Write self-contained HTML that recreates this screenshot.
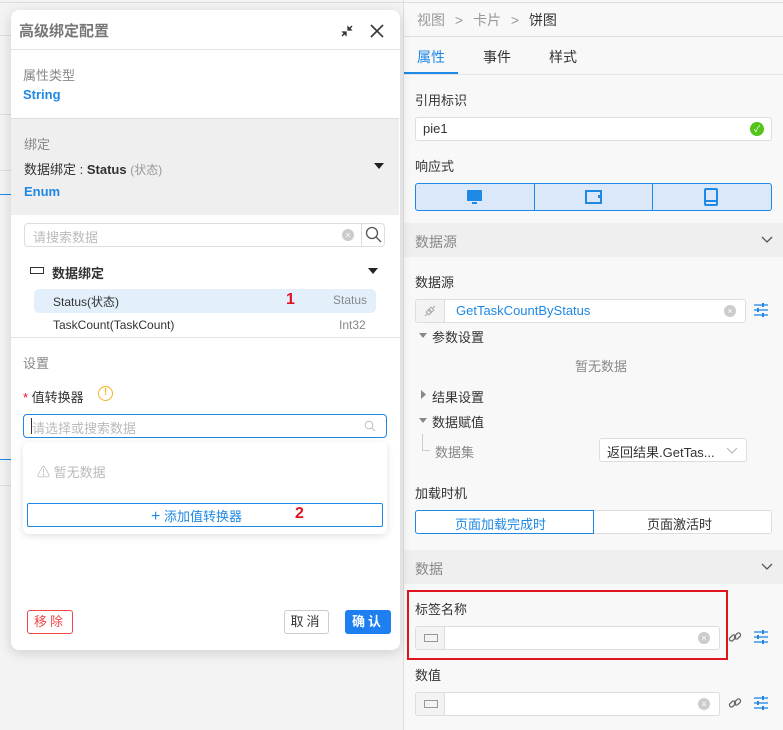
<!DOCTYPE html>
<html><head><meta charset="utf-8"><style>
*{box-sizing:border-box;margin:0;padding:0}
body{width:783px;height:730px;overflow:hidden;background:#f3f3f3;font-family:"Liberation Sans","Noto Sans CJK SC",sans-serif;font-size:13px;color:#333;position:relative}
.a{position:absolute}
.t{position:absolute;white-space:nowrap}
.inp{position:absolute;background:#fff;border:1px solid #ddd;border-radius:3px}
.clr{position:absolute;width:12px;height:12px;border-radius:50%;background:#ccc;color:#fff;font-size:9px;line-height:12px;text-align:center}
</style></head><body>
<div class="a" style="left:0;top:2px;width:403px;height:1px;background:#ddd"></div>
<div class="a" style="left:0;top:35px;width:12px;height:1px;background:#ddd"></div>
<div class="a" style="left:0;top:114px;width:12px;height:1px;background:#ddd"></div>
<div class="a" style="left:0;top:170px;width:12px;height:1px;background:#ddd"></div>
<div class="a" style="left:0;top:194px;width:12px;height:1px;background:#1e88e5"></div>
<div class="a" style="left:0;top:459px;width:12px;height:1px;background:#1e88e5"></div>
<div class="a" style="left:0;top:485px;width:12px;height:1px;background:#ddd"></div>

<div class="a" style="left:403px;top:0;width:380px;height:730px;background:#f8f8f8;border-left:1px solid #ddd"></div>
<div class="a" style="left:403px;top:2px;width:380px;height:1px;background:#ddd"></div>
<div class="t" style="left:417px;top:10px;color:#999;font-size:14px">视图 <span style="margin:0 6px">&gt;</span> 卡片 <span style="margin:0 6px">&gt;</span> <span style="color:#333">饼图</span></div>
<div class="a" style="left:403px;top:36px;width:380px;height:1px;background:#ddd"></div>
<div class="t" style="left:417px;top:47px;color:#1e88e5;font-size:14px">属性</div>
<div class="t" style="left:483px;top:47px;font-size:14px">事件</div>
<div class="t" style="left:549px;top:47px;font-size:14px">样式</div>
<div class="a" style="left:404px;top:72px;width:54px;height:3px;background:#1e88e5"></div>
<div class="a" style="left:404px;top:74px;width:379px;height:1px;background:#e5e5e5"></div>
<div class="t" style="left:415px;top:90px;font-size:13px">引用标识</div>
<div class="inp" style="left:415px;top:117px;width:357px;height:24px"></div>
<div class="t" style="left:423px;top:121px;font-size:13px">pie1</div>
<div class="a" style="left:750px;top:122px;width:14px;height:14px;border-radius:50%;background:#52c41a;color:#fff;font-size:9px;text-align:center;line-height:14px">✓</div>
<div class="t" style="left:415px;top:156px">响应式</div>
<div class="a" style="left:415px;top:183px;width:357px;height:28px;background:#dbe8fa;border:1px solid #1e88e5;border-radius:3px"></div>
<div class="a" style="left:534px;top:183px;width:1px;height:28px;background:#1e88e5"></div>
<div class="a" style="left:652px;top:183px;width:1px;height:28px;background:#1e88e5"></div>
<svg class="a" style="left:466px;top:189px" width="17" height="17" viewBox="0 0 17 17"><rect x="1" y="1" width="15" height="10" rx="1" fill="#1e88e5"/><rect x="1" y="10" width="15" height="2" fill="#1e88e5"/><rect x="6" y="13" width="5" height="2" fill="#1e88e5"/></svg>
<svg class="a" style="left:585px;top:190px" width="17" height="15"><rect x="1" y="1" width="15" height="12" fill="none" stroke="#1e88e5" stroke-width="2"/><rect x="13" y="5" width="2" height="3" fill="#1e88e5"/></svg>
<svg class="a" style="left:704px;top:188px" width="14" height="18"><rect x="1" y="1" width="12" height="16" rx="1" fill="none" stroke="#1e88e5" stroke-width="2"/><rect x="2" y="12" width="10" height="2" fill="#1e88e5"/></svg>
<div class="a" style="left:404px;top:223px;width:379px;height:34px;background:#efefef"></div>
<div class="t" style="left:415px;top:232px;color:#888;font-size:14px">数据源</div>
<svg class="a" style="left:761px;top:236px" width="12" height="8"><path d="M1 1 L6 6 L11 1" fill="none" stroke="#555" stroke-width="1.3"/></svg>
<div class="t" style="left:415px;top:272px">数据源</div>
<div class="inp" style="left:415px;top:299px;width:331px;height:24px"></div>
<div class="a" style="left:416px;top:300px;width:29px;height:22px;background:#f3f3f3;border-right:1px solid #ddd"></div>
<svg class="a" style="left:423px;top:304px" width="14" height="14"><g fill="none" stroke="#aaa" stroke-width="1"><path d="M2 12 L5 9 M12 2 L9 5"/><rect x="4" y="6" width="4" height="4" transform="rotate(-45 6 8)"/><rect x="6" y="4" width="4" height="4" transform="rotate(-45 8 6)"/></g></svg>
<div class="t" style="left:456px;top:303px;color:#1e88e5">GetTaskCountByStatus</div>
<div class="clr" style="left:724px;top:305px">×</div>
<svg class="a" style="left:754px;top:303px" width="14" height="14"><g stroke="#1e88e5" stroke-width="1.3"><line x1="0" y1="2" x2="14" y2="2"/><line x1="0" y1="7" x2="14" y2="7"/><line x1="0" y1="12" x2="14" y2="12"/></g><g fill="#1e88e5"><rect x="8" y="0" width="2" height="4"/><rect x="3" y="5" width="2" height="4"/><rect x="8" y="10" width="2" height="4"/></g></svg>
<svg class="a" style="left:419px;top:333px" width="8" height="6"><path d="M0 0 L8 0 L4 5Z" fill="#888"/></svg>
<div class="t" style="left:432px;top:327px">参数设置</div>
<div class="t" style="left:575px;top:356px;color:#888">暂无数据</div>
<svg class="a" style="left:421px;top:390px" width="6" height="9"><path d="M0 0 L5 4.5 L0 9Z" fill="#888"/></svg>
<div class="t" style="left:432px;top:387px">结果设置</div>
<svg class="a" style="left:419px;top:418px" width="8" height="6"><path d="M0 0 L8 0 L4 5Z" fill="#888"/></svg>
<div class="t" style="left:432px;top:412px">数据赋值</div>
<div class="a" style="left:422px;top:434px;width:8px;height:17px;border-left:1px solid #ccc;border-bottom:1px solid #ccc"></div>
<div class="t" style="left:435px;top:442px;color:#888">数据集</div>
<div class="inp" style="left:599px;top:438px;width:148px;height:24px"></div>
<div class="t" style="left:607px;top:442px">返回结果.GetTas...</div>
<svg class="a" style="left:726px;top:447px" width="12" height="8"><path d="M1 1 L6 6 L11 1" fill="none" stroke="#bbb" stroke-width="1.2"/></svg>
<div class="t" style="left:415px;top:483px">加载时机</div>
<div class="inp" style="left:415px;top:510px;width:357px;height:24px"></div>
<div class="a" style="left:415px;top:510px;width:179px;height:24px;border:1px solid #1e88e5;border-radius:3px 0 0 3px;background:#fff"></div>
<div class="t" style="left:455px;top:514px;color:#1e88e5">页面加载完成时</div>
<div class="t" style="left:647px;top:514px">页面激活时</div>
<div class="a" style="left:404px;top:550px;width:379px;height:34px;background:#efefef"></div>
<div class="t" style="left:415px;top:559px;color:#888;font-size:14px">数据</div>
<svg class="a" style="left:761px;top:563px" width="12" height="8"><path d="M1 1 L6 6 L11 1" fill="none" stroke="#555" stroke-width="1.3"/></svg>
<div class="a" style="left:407px;top:590px;width:321px;height:70px;border:2px solid #e0141e"></div>
<div class="t" style="left:415px;top:599px">标签名称</div>
<div class="inp" style="left:415px;top:626px;width:305px;height:24px"></div>
<div class="a" style="left:416px;top:627px;width:29px;height:22px;background:#f3f3f3;border-right:1px solid #ddd"></div>
<div class="a" style="left:424px;top:634px;width:14px;height:8px;border:1px solid #999"></div>
<div class="clr" style="left:698px;top:632px">×</div>
<svg class="a" style="left:728px;top:630px" width="14" height="14"><g fill="none" stroke="#666" stroke-width="1.3"><rect x="1" y="6" width="7" height="4" rx="2" transform="rotate(-45 4.5 8)"/><rect x="6" y="4" width="7" height="4" rx="2" transform="rotate(-45 9.5 6)"/></g></svg>
<svg class="a" style="left:754px;top:630px" width="14" height="14"><g stroke="#1e88e5" stroke-width="1.3"><line x1="0" y1="2" x2="14" y2="2"/><line x1="0" y1="7" x2="14" y2="7"/><line x1="0" y1="12" x2="14" y2="12"/></g><g fill="#1e88e5"><rect x="8" y="0" width="2" height="4"/><rect x="3" y="5" width="2" height="4"/><rect x="8" y="10" width="2" height="4"/></g></svg>
<div class="t" style="left:415px;top:665px">数值</div>
<div class="inp" style="left:415px;top:692px;width:305px;height:24px"></div>
<div class="a" style="left:416px;top:693px;width:29px;height:22px;background:#f3f3f3;border-right:1px solid #ddd"></div>
<div class="a" style="left:424px;top:700px;width:14px;height:8px;border:1px solid #999"></div>
<div class="clr" style="left:698px;top:698px">×</div>
<svg class="a" style="left:728px;top:696px" width="14" height="14"><g fill="none" stroke="#666" stroke-width="1.3"><rect x="1" y="6" width="7" height="4" rx="2" transform="rotate(-45 4.5 8)"/><rect x="6" y="4" width="7" height="4" rx="2" transform="rotate(-45 9.5 6)"/></g></svg>
<svg class="a" style="left:754px;top:696px" width="14" height="14"><g stroke="#1e88e5" stroke-width="1.3"><line x1="0" y1="2" x2="14" y2="2"/><line x1="0" y1="7" x2="14" y2="7"/><line x1="0" y1="12" x2="14" y2="12"/></g><g fill="#1e88e5"><rect x="8" y="0" width="2" height="4"/><rect x="3" y="5" width="2" height="4"/><rect x="8" y="10" width="2" height="4"/></g></svg>

<div class="a" style="left:11px;top:10px;width:389px;height:640px;background:#fff;border-radius:8px;box-shadow:0 3px 12px rgba(0,0,0,.15)"></div>
<div class="t" style="left:19px;top:20px;color:#777;font-size:15px;font-weight:bold">高级绑定配置</div>
<svg class="a" style="left:340px;top:24px" width="14" height="14"><g stroke="#333" stroke-width="1.3" fill="#333"><line x1="2" y1="12" x2="5" y2="9"/><path d="M3 8 L6 8 L6 11Z"/><line x1="12" y1="2" x2="9" y2="5"/><path d="M8 3 L8 6 L11 6Z"/></g></svg>
<svg class="a" style="left:370px;top:24px" width="14" height="14"><path d="M1 1 L13 13 M13 1 L1 13" stroke="#333" stroke-width="1.6"/></svg>
<div class="a" style="left:11px;top:49px;width:389px;height:1px;background:#e3e3e3"></div>
<div class="t" style="left:23px;top:65px;color:#888">属性类型</div>
<div class="t" style="left:23px;top:87px;color:#1e88e5;font-weight:bold">String</div>
<div class="a" style="left:11px;top:118px;width:388px;height:97px;background:#efefef;border-top:1px solid #ddd"></div>
<div class="t" style="left:24px;top:134px;color:#888">绑定</div>
<div class="t" style="left:24px;top:159px">数据绑定 : <b>Status</b> <span style="color:#999;font-size:12px">(状态)</span></div>
<svg class="a" style="left:374px;top:163px" width="10" height="7"><path d="M0 0 L10 0 L5 6Z" fill="#222"/></svg>
<div class="t" style="left:24px;top:184px;color:#1e88e5;font-weight:bold">Enum</div>
<div class="inp" style="left:24px;top:223px;width:361px;height:24px;border-radius:4px"></div>
<div class="a" style="left:361px;top:224px;width:1px;height:22px;background:#ddd"></div>
<div class="t" style="left:33px;top:227px;color:#bbb">请搜索数据</div>
<div class="clr" style="left:342px;top:229px">×</div>
<svg class="a" style="left:365px;top:226px" width="17" height="17"><circle cx="7" cy="7" r="5.5" fill="none" stroke="#555" stroke-width="1.3"/><line x1="11" y1="11" x2="16" y2="16" stroke="#555" stroke-width="1.3"/></svg>
<div class="a" style="left:30px;top:267px;width:14px;height:7px;border:1px solid #333"></div>
<div class="t" style="left:52px;top:263px;font-weight:bold">数据绑定</div>
<svg class="a" style="left:368px;top:268px" width="10" height="7"><path d="M0 0 L10 0 L5 6Z" fill="#222"/></svg>
<div class="a" style="left:34px;top:289px;width:342px;height:24px;background:#e3f0fb;border-radius:5px"></div>
<div class="t" style="left:53px;top:293px;font-size:12px">Status(状态)</div>
<div class="t" style="left:286px;top:291px;color:#e0141e;font-weight:bold;font-size:16px">1</div>
<div class="t" style="left:333px;top:293px;color:#888;font-size:12px">Status</div>
<div class="t" style="left:53px;top:318px;font-size:12px">TaskCount(TaskCount)</div>
<div class="t" style="left:339px;top:318px;color:#888;font-size:12px">Int32</div>
<div class="a" style="left:11px;top:337px;width:389px;height:1px;background:#e3e3e3"></div>
<div class="t" style="left:23px;top:353px;color:#888">设置</div>
<div class="t" style="left:23px;top:387px"><span style="color:#e0141e">*</span> 值转换器</div>
<div class="a" style="left:98px;top:386px;width:15px;height:15px;border:1.5px solid #f5b225;border-radius:50%;color:#f5b225;font-size:10px;text-align:center;line-height:12px;font-weight:bold">!</div>
<div class="inp" style="left:23px;top:414px;width:364px;height:24px;border:1px solid #1e88e5;border-radius:4px"></div>
<div class="a" style="left:31px;top:418px;width:1px;height:16px;background:#333"></div>
<div class="t" style="left:32px;top:418px;color:#bbb">请选择或搜索数据</div>
<svg class="a" style="left:364px;top:420px" width="12" height="12"><circle cx="5" cy="5" r="3.8" fill="none" stroke="#bbb" stroke-width="1"/><line x1="8" y1="8" x2="11" y2="11" stroke="#bbb"/></svg>
<div class="a" style="left:23px;top:442px;width:364px;height:92px;background:#fff;border-radius:6px;box-shadow:0 2px 8px rgba(0,0,0,.12)"></div>
<div class="t" style="left:37px;top:462px;color:#bbb">⚠ 暂无数据</div>
<div class="a" style="left:27px;top:503px;width:356px;height:24px;border:1px solid #1e88e5;border-radius:2px"></div>
<div class="t" style="left:151px;top:506px;color:#1e88e5"><span style="font-size:16px">+</span> 添加值转换器</div>
<div class="t" style="left:295px;top:505px;color:#e0141e;font-weight:bold;font-size:16px">2</div>
<div class="a" style="left:27px;top:610px;width:46px;height:24px;border:1px solid #f04848;border-radius:3px;color:#f04848;text-align:center;line-height:22px;letter-spacing:3px">移除</div>
<div class="a" style="left:284px;top:610px;width:45px;height:24px;border:1px solid #ccc;border-radius:3px;text-align:center;line-height:22px;letter-spacing:3px">取消</div>
<div class="a" style="left:345px;top:610px;width:46px;height:24px;background:#1e7ff0;border-radius:3px;color:#fff;text-align:center;line-height:24px;letter-spacing:3px;font-weight:bold">确认</div>
</body></html>
